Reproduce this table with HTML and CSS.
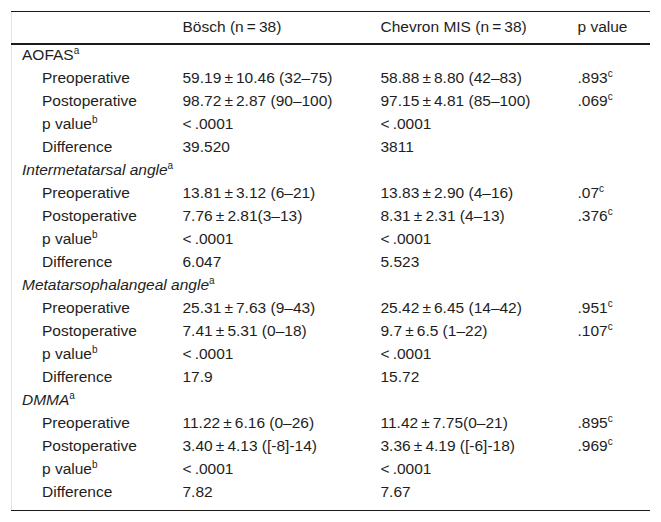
FILE: index.html
```html
<!DOCTYPE html>
<html>
<head>
<meta charset="utf-8">
<link rel="stylesheet" href="styles.css">
</head>
<body>
<table class="tbl">
  <colgroup>
    <col class="c1"><col class="c2"><col class="c3"><col class="c4">
  </colgroup>
  <thead>
    <tr><th></th><th>Bösch (n&#8201;=&#8201;38)</th><th>Chevron MIS (n&#8201;=&#8201;38)</th><th>p value</th></tr>
  </thead>
  <tbody>
    <tr class="grp"><td>AOFAS<sup>a</sup></td><td></td><td></td><td></td></tr>
    <tr><td class="sub">Preoperative</td><td>59.19&#8201;±&#8201;10.46 (32–75)</td><td>58.88&#8201;±&#8201;8.80 (42–83)</td><td>.893<sup>c</sup></td></tr>
    <tr><td class="sub">Postoperative</td><td>98.72&#8201;±&#8201;2.87 (90–100)</td><td>97.15&#8201;±&#8201;4.81 (85–100)</td><td>.069<sup>c</sup></td></tr>
    <tr><td class="sub">p value<sup>b</sup></td><td>&lt;&#8201;.0001</td><td>&lt;&#8201;.0001</td><td></td></tr>
    <tr><td class="sub">Difference</td><td>39.520</td><td>3811</td><td></td></tr>
    <tr class="grp"><td><em>Intermetatarsal angle</em><sup>a</sup></td><td></td><td></td><td></td></tr>
    <tr><td class="sub">Preoperative</td><td>13.81&#8201;±&#8201;3.12 (6–21)</td><td>13.83&#8201;±&#8201;2.90 (4–16)</td><td>.07<sup>c</sup></td></tr>
    <tr><td class="sub">Postoperative</td><td>7.76&#8201;±&#8201;2.81(3–13)</td><td>8.31&#8201;±&#8201;2.31 (4–13)</td><td>.376<sup>c</sup></td></tr>
    <tr><td class="sub">p value<sup>b</sup></td><td>&lt;&#8201;.0001</td><td>&lt;&#8201;.0001</td><td></td></tr>
    <tr><td class="sub">Difference</td><td>6.047</td><td>5.523</td><td></td></tr>
    <tr class="grp"><td><em>Metatarsophalangeal angle</em><sup>a</sup></td><td></td><td></td><td></td></tr>
    <tr><td class="sub">Preoperative</td><td>25.31&#8201;±&#8201;7.63 (9–43)</td><td>25.42&#8201;±&#8201;6.45 (14–42)</td><td>.951<sup>c</sup></td></tr>
    <tr><td class="sub">Postoperative</td><td>7.41&#8201;±&#8201;5.31 (0–18)</td><td>9.7&#8201;±&#8201;6.5 (1–22)</td><td>.107<sup>c</sup></td></tr>
    <tr><td class="sub">p value<sup>b</sup></td><td>&lt;&#8201;.0001</td><td>&lt;&#8201;.0001</td><td></td></tr>
    <tr><td class="sub">Difference</td><td>17.9</td><td>15.72</td><td></td></tr>
    <tr class="grp"><td><em>DMMA</em><sup>a</sup></td><td></td><td></td><td></td></tr>
    <tr><td class="sub">Preoperative</td><td>11.22&#8201;±&#8201;6.16 (0–26)</td><td>11.42&#8201;±&#8201;7.75(0–21)</td><td>.895<sup>c</sup></td></tr>
    <tr><td class="sub">Postoperative</td><td>3.40&#8201;±&#8201;4.13 ([-8]-14)</td><td>3.36&#8201;±&#8201;4.19 ([-6]-18)</td><td>.969<sup>c</sup></td></tr>
    <tr><td class="sub">p value<sup>b</sup></td><td>&lt;&#8201;.0001</td><td>&lt;&#8201;.0001</td><td></td></tr>
    <tr class="last"><td class="sub">Difference</td><td>7.82</td><td>7.67</td><td></td></tr>
  </tbody>
</table>
</body>
</html>
```
FILE: styles.css
```css
html, body {
  background: #ffffff;
}
body {
  margin: 11px;
  font-family: "Liberation Sans", Arial, sans-serif;
  font-size: 15.5px;
  color: #1e1e1e;
}
.tbl {
  width: 640px;
  table-layout: fixed;
  border-collapse: collapse;
  border-top: 1px solid #1a1a1a;
  border-bottom: 1px solid #1a1a1a;
  border-left: 1px solid #e3e3e3;
  border-right: 1px solid #e3e3e3;
}
.c1 { width: 161px; }
.c2 { width: 198px; }
.c3 { width: 197px; }
.c4 { width: 84px; }
th {
  font-weight: normal;
  text-align: left;
  line-height: 18px;
  padding: 6px 0 7px 10px;
  border-bottom: 2px solid #1a1a1a;
  white-space: nowrap;
}
td {
  line-height: 20px;
  padding: 0 0 3px 10px;
  white-space: nowrap;
  vertical-align: top;
}
td.sub {
  padding-left: 30px;
}
tr.last td {
  padding-bottom: 8px;
}
sup {
  font-size: 10px;
  line-height: 0;
  vertical-align: 6px;
}
```
